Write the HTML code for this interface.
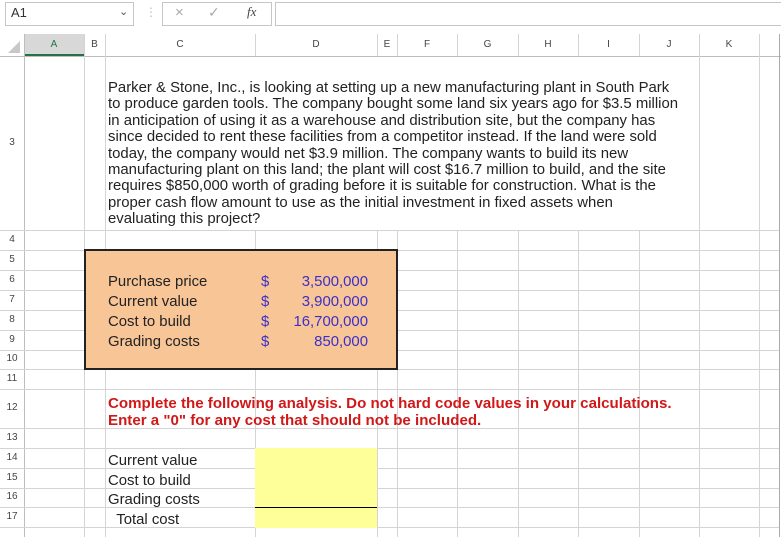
<!DOCTYPE html>
<html><head><style>
body{margin:0;width:781px;height:537px;overflow:hidden;background:#fff;font-family:"Liberation Sans",Arial,sans-serif;position:relative}
.a{position:absolute}
.vl{position:absolute;width:1px;background:#d4d4d4}
.hl{position:absolute;height:1px;background:#d4d4d4}
.rh{position:absolute;left:0;width:24px;text-align:center;font-size:10px;color:#444}
.ch{position:absolute;top:34px;height:22px;line-height:22px;text-align:center;font-size:10px;color:#444}
.t{position:absolute;font-size:14.9px;color:#222;white-space:nowrap}
</style></head><body>
<div class="a" style="left:5px;top:2px;width:127px;height:22px;border:1px solid #c6c6c6"></div>
<div class="t" style="left:11px;top:5px;font-size:13px;color:#333">A1</div>
<div class="t" style="left:119px;top:5px;font-size:11px;color:#555">&#8964;</div>
<div class="t" style="left:145px;top:5px;font-size:12px;color:#bbb">&#8942;</div>
<div class="a" style="left:162px;top:2px;width:108px;height:22px;border:1px solid #c6c6c6"></div>
<div class="t" style="left:175px;top:4px;font-size:15px;color:#aaa">&#215;</div>
<div class="t" style="left:208px;top:4px;font-size:14px;color:#aaa">&#10003;</div>
<div class="t" style="left:247px;top:4px;font-size:13px;font-style:italic;font-family:'Liberation Serif',serif;color:#444">fx</div>
<div class="a" style="left:275px;top:2px;width:510px;height:22px;border:1px solid #c6c6c6"></div>
<div class="a" style="left:0;top:34px;width:781px;height:22px;background:#fff;border-bottom:1px solid #bdbdbd"></div>
<div class="a" style="left:24px;top:34px;width:60px;height:20px;background:#d8d8d8;border-bottom:2px solid #217346"></div>
<svg class="a" style="left:8px;top:41px" width="12" height="12"><polygon points="12,0 12,12 0,12" fill="#c8c8c8"/></svg>
<div class="ch" style="left:24px;width:60px;color:#217346">A</div>
<div class="ch" style="left:84px;width:21px">B</div>
<div class="ch" style="left:105px;width:150px">C</div>
<div class="ch" style="left:255px;width:122px">D</div>
<div class="ch" style="left:377px;width:20px">E</div>
<div class="ch" style="left:397px;width:60px">F</div>
<div class="ch" style="left:457px;width:61px">G</div>
<div class="ch" style="left:518px;width:60px">H</div>
<div class="ch" style="left:578px;width:61px">I</div>
<div class="ch" style="left:639px;width:60px">J</div>
<div class="ch" style="left:699px;width:60px">K</div>
<div class="vl" style="left:24px;top:34px;height:503px;background:#bdbdbd"></div>
<div class="vl" style="left:84px;top:34px;height:503px"></div>
<div class="vl" style="left:105px;top:34px;height:503px"></div>
<div class="vl" style="left:255px;top:230px;height:307px"></div>
<div class="vl" style="left:377px;top:230px;height:307px"></div>
<div class="vl" style="left:397px;top:230px;height:307px"></div>
<div class="vl" style="left:457px;top:230px;height:307px"></div>
<div class="vl" style="left:518px;top:230px;height:307px"></div>
<div class="vl" style="left:578px;top:230px;height:307px"></div>
<div class="vl" style="left:639px;top:230px;height:307px"></div>
<div class="vl" style="left:699px;top:34px;height:503px"></div>
<div class="vl" style="left:759px;top:34px;height:503px"></div>
<div class="vl" style="left:779px;top:34px;height:503px;background:#aaa"></div>
<div class="vl" style="left:255px;top:34px;height:22px"></div>
<div class="vl" style="left:377px;top:34px;height:22px"></div>
<div class="vl" style="left:397px;top:34px;height:22px"></div>
<div class="vl" style="left:457px;top:34px;height:22px"></div>
<div class="vl" style="left:518px;top:34px;height:22px"></div>
<div class="vl" style="left:578px;top:34px;height:22px"></div>
<div class="vl" style="left:639px;top:34px;height:22px"></div>
<div class="hl" style="left:0;top:230px;width:779px"></div>
<div class="hl" style="left:0;top:250px;width:779px"></div>
<div class="hl" style="left:0;top:270px;width:779px"></div>
<div class="hl" style="left:0;top:290px;width:779px"></div>
<div class="hl" style="left:0;top:310px;width:779px"></div>
<div class="hl" style="left:0;top:330px;width:779px"></div>
<div class="hl" style="left:0;top:350px;width:779px"></div>
<div class="hl" style="left:0;top:369px;width:779px"></div>
<div class="hl" style="left:0;top:389px;width:779px"></div>
<div class="hl" style="left:0;top:428px;width:779px"></div>
<div class="hl" style="left:0;top:448px;width:779px"></div>
<div class="hl" style="left:0;top:468px;width:779px"></div>
<div class="hl" style="left:0;top:488px;width:779px"></div>
<div class="hl" style="left:0;top:507px;width:779px"></div>
<div class="hl" style="left:0;top:527px;width:779px"></div>
<div class="rh" style="top:137px">3</div>
<div class="rh" style="top:234px">4</div>
<div class="rh" style="top:254px">5</div>
<div class="rh" style="top:274px">6</div>
<div class="rh" style="top:294px">7</div>
<div class="rh" style="top:314px">8</div>
<div class="rh" style="top:334px">9</div>
<div class="rh" style="top:353px">10</div>
<div class="rh" style="top:373px">11</div>
<div class="rh" style="top:402px">12</div>
<div class="rh" style="top:432px">13</div>
<div class="rh" style="top:452px">14</div>
<div class="rh" style="top:472px">15</div>
<div class="rh" style="top:491px">16</div>
<div class="rh" style="top:511px">17</div>
<div class="t" style="left:108px;top:80px;line-height:16.4px">Parker &amp; Stone, Inc., is looking at setting up a new manufacturing plant in South Park<br>to produce garden tools. The company bought some land six years ago for $3.5 million<br>in anticipation of using it as a warehouse and distribution site, but the company has<br>since decided to rent these facilities from a competitor instead. If the land were sold<br>today, the company would net $3.9 million. The company wants to build its new<br>manufacturing plant on this land; the plant will cost $16.7 million to build, and the site<br>requires $850,000 worth of grading before it is suitable for construction. What is the<br>proper cash flow amount to use as the initial investment in fixed assets when<br>evaluating this project?</div>
<div class="a" style="left:84px;top:249px;width:310px;height:117px;background:#f8c597;border:2px solid #222"></div>
<div class="t" style="left:108px;top:272px;line-height:20px">Purchase price<br>Current value<br>Cost to build<br>Grading costs</div>
<div class="t" style="left:261px;top:272px;line-height:20px;color:#3b2fc9">$<br>$<br>$<br>$</div>
<div class="t" style="left:260px;top:272px;width:108px;text-align:right;line-height:20px;color:#3b2fc9">3,500,000<br>3,900,000<br>16,700,000<br>850,000</div>
<div class="t" style="left:108px;top:396px;line-height:16.5px;color:#d01818;font-weight:bold;font-size:15.1px">Complete the following analysis. Do not hard code values in your calculations.<br>Enter a "0" for any cost that should not be included.</div>
<div class="a" style="left:255px;top:448px;width:122px;height:80px;background:#ffff99"></div>
<div class="a" style="left:255px;top:507px;width:122px;height:1px;background:#000"></div>
<div class="t" style="left:108px;top:452px;line-height:19.6px">Current value<br>Cost to build<br>Grading costs<br>&nbsp;&nbsp;Total cost</div>
</body></html>
